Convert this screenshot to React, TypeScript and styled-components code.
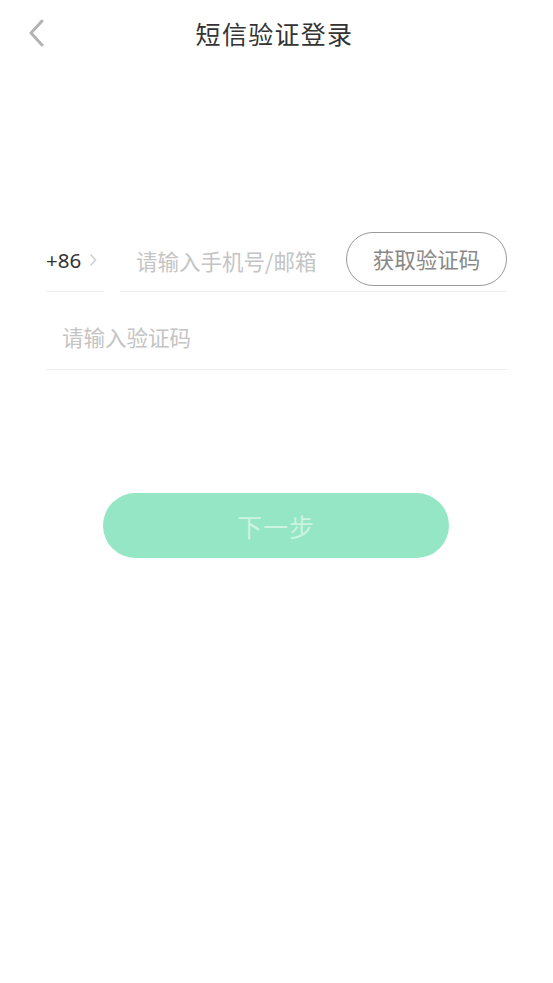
import React from "react";
import styled, { createGlobalStyle } from "styled-components";

const GlobalStyle = createGlobalStyle`
  html, body { margin: 0; padding: 0; background: #ffffff; }
  body { font-family: "Noto Sans", "Noto Sans CJK SC", sans-serif; }
  * { box-sizing: border-box; }
`;

const Page = styled.div`
  width: 553px;
  min-height: 983px;
  background: #ffffff;
`;

const Header = styled.header`
  display: grid;
  grid-template-columns: 1fr auto 1fr;
  align-items: center;
  height: 70px;
  padding: 0 0 4px 24px;
`;

const BackButton = styled.button`
  justify-self: start;
  display: flex;
  align-items: center;
  justify-content: center;
  width: 24px;
  height: 32px;
  padding: 0;
  border: none;
  background: none;
`;

const Title = styled.h1`
  margin: 0;
  font-family: "Noto Sans CJK SC", sans-serif;
  font-size: 25px;
  font-weight: 400;
  color: #333333;
  letter-spacing: 1.3px;
  padding-right: 28px;
`;

const Form = styled.div`
  padding: 161px 46px 0;
`;

const PhoneRow = styled.div`
  display: flex;
  gap: 16px;
  height: 61px;
`;

const Country = styled.div`
  display: flex;
  align-items: center;
  width: 58px;
  border-bottom: 1px solid #eeeeee;
  font-size: 20.5px;
  color: #333333;
  gap: 8px;
  padding-bottom: 2px;
`;

const FieldCell = styled.div<{ $top?: number }>`
  flex: 1;
  display: flex;
  align-items: center;
  justify-content: space-between;
  border-bottom: 1px solid #eeeeee;
  padding-left: 16px;
  padding-top: ${(p) => p.$top ?? 0}px;
`;

const Placeholder = styled.span`
  font-family: "Noto Sans CJK SC", sans-serif;
  font-size: 21.5px;
  color: #c4c4c4;
  padding-bottom: 2px;
`;

const CodeButton = styled.button`
  height: 54px;
  width: 161px;
  margin-bottom: 4px;
  border: 1.5px solid #999999;
  border-radius: 27px;
  background: #ffffff;
  font-family: "Noto Sans CJK SC", sans-serif;
  font-size: 21.5px;
  color: #888888;
  padding: 0 0 2px;
`;

const CodeRow = styled.div`
  display: flex;
  height: 78px;
`;

const NextButton = styled.button`
  display: block;
  margin: 123px 0 0 57px;
  width: 346px;
  height: 65px;
  border: none;
  border-radius: 33px;
  background: #95e6c4;
  font-family: "Noto Sans CJK SC", sans-serif;
  font-size: 25px;
  color: #cdf3e1;
  letter-spacing: 1px;
`;

export default function App() {
  return (
    <Page>
      <GlobalStyle />
      <Header>
        <BackButton aria-label="返回">
          <svg width="18" height="28" viewBox="0 0 18 28">
            <path
              d="M15 2 L4 14 L15 26"
              fill="none"
              stroke="#b3b3b3"
              strokeWidth="3"
              strokeLinecap="round"
              strokeLinejoin="round"
            />
          </svg>
        </BackButton>
        <Title>短信验证登录</Title>
        <span />
      </Header>
      <Form>
        <PhoneRow>
          <Country>
            <span>+86</span>
            <svg width="8" height="14" viewBox="0 0 8 14">
              <path d="M1.5 1.5 L6.5 7 L1.5 12.5" fill="none" stroke="#d0d0d0" strokeWidth="1.6" />
            </svg>
          </Country>
          <FieldCell>
            <Placeholder>请输入手机号/邮箱</Placeholder>
            <CodeButton>获取验证码</CodeButton>
          </FieldCell>
        </PhoneRow>
        <CodeRow>
          <FieldCell $top={14}>
            <Placeholder>请输入验证码</Placeholder>
          </FieldCell>
        </CodeRow>
        <NextButton>下一步</NextButton>
      </Form>
    </Page>
  );
}
